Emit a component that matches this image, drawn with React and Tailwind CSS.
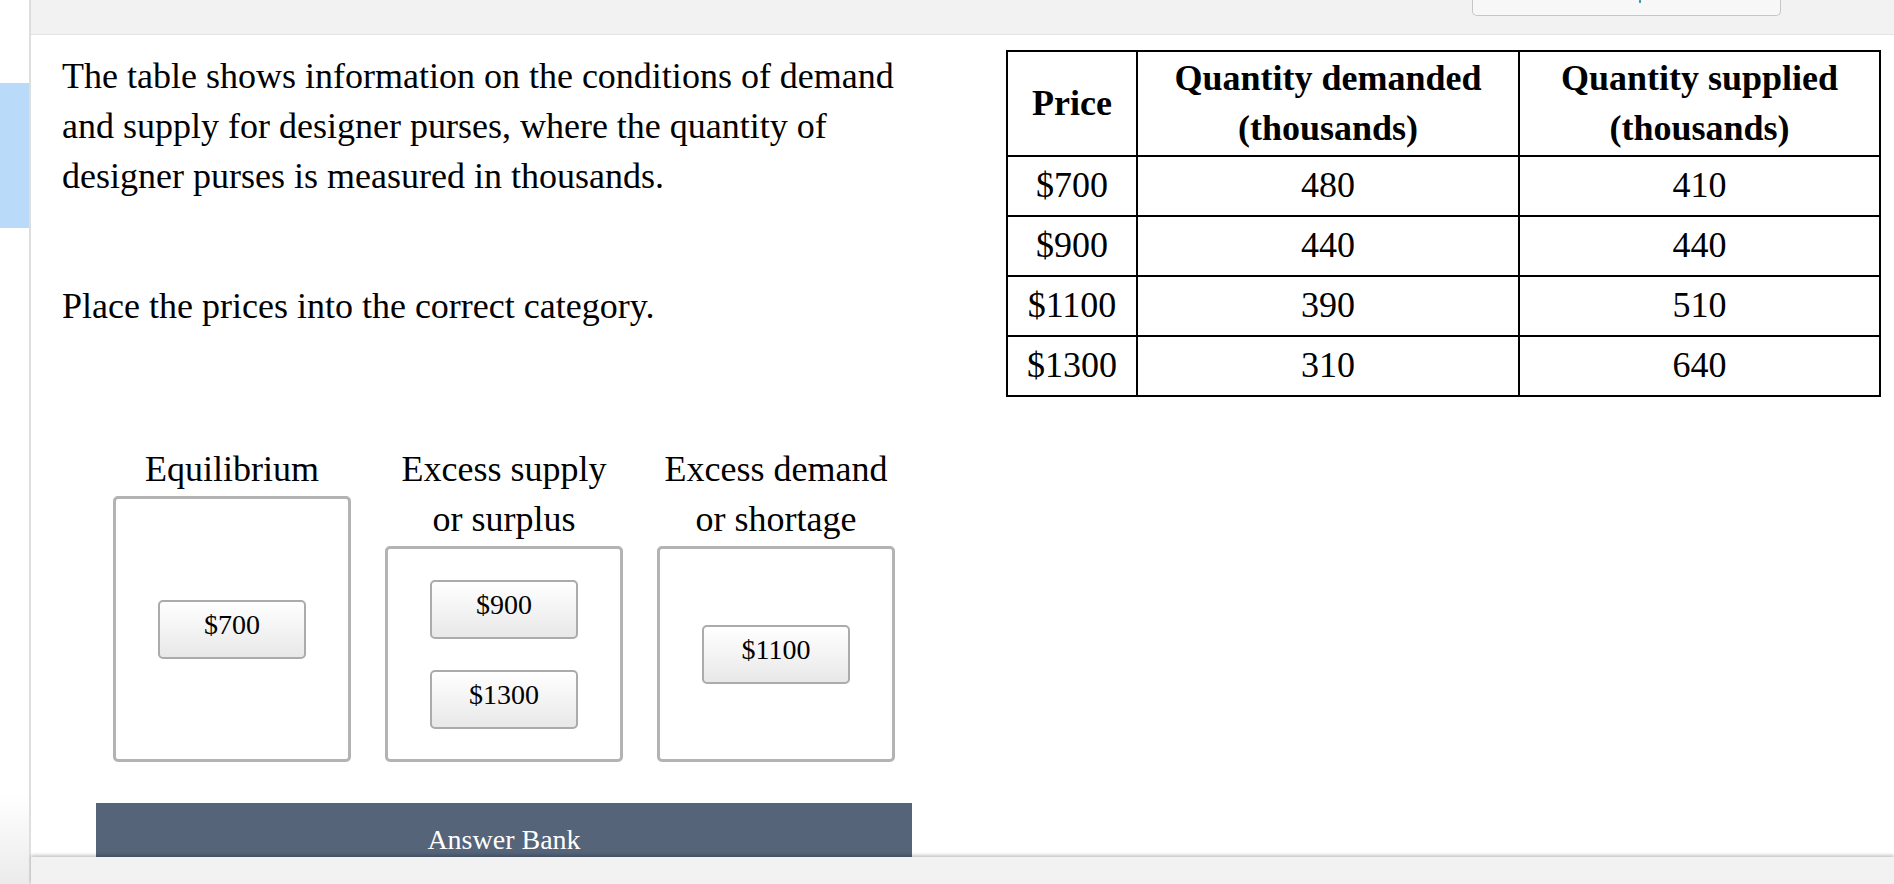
import React from "react";

const ROWS = [
  ["$700", "480", "410"],
  ["$900", "440", "440"],
  ["$1100", "390", "510"],
  ["$1300", "310", "640"],
];

const BINS = [
  { label: ["Equilibrium"], height: "h-[266px]", items: ["$700"] },
  { label: ["Excess supply", "or surplus"], height: "h-[216px]", items: ["$900", "$1300"] },
  { label: ["Excess demand", "or shortage"], height: "h-[216px]", items: ["$1100"] },
];

function Chip({ children }) {
  return (
    <div className="w-[148px] h-[59px] flex items-center justify-center border-2 border-[#ababab] rounded-[5px] bg-linear-to-b from-white to-[#e8e8e8] text-[28px] leading-none text-black pb-[8px]">
      {children}
    </div>
  );
}

export default function App() {
  return (
    <div className="w-[1894px] h-[884px] flex overflow-hidden bg-white text-black font-['Liberation_Serif',serif]">
      {/* left rail */}
      <div className="w-[31px] flex flex-col border-r-2 border-[#dedede] shrink-0">
        <div className="h-[83px] bg-white" />
        <div className="h-[145px] bg-[#badafa]" />
        <div className="flex-1 bg-white" />
        <div className="h-[90px] bg-linear-to-b from-white to-[#ebebeb]" />
      </div>

      <div className="flex-1 flex flex-col min-w-0">
        {/* top bar */}
        <div className="h-[35px] bg-[#f2f2f2] border-b border-[#e4e4e4] flex justify-end pr-[113px] shrink-0">
          <div className="w-[309px] h-[16px] bg-[#f7f7f7] border border-t-0 border-[#c6c6c6] rounded-b-[5px] pl-[166px]">
            <div className="w-[2px] h-[3px] bg-[#4a97b4]" />
          </div>
        </div>

        {/* content */}
        <div className="flex-1 flex overflow-hidden pt-[16px] pl-[31px]">
          <div className="w-[884px] shrink-0 flex flex-col">
            <p className="text-[36px] leading-[50px]">
              The table shows information on the conditions of demand and supply for designer purses, where the
              quantity of designer purses is measured in thousands.
            </p>
            <p className="text-[36px] leading-[50px] mt-[80px]">Place the prices into the correct category.</p>

            <div className="mt-[113px] flex justify-center items-end gap-[34px]">
              {BINS.map((bin) => (
                <div key={bin.label[0]} className="w-[238px] flex flex-col items-center">
                  <div className="text-[36px] leading-[50px] text-center mb-[2px]">
                    {bin.label.map((l) => (
                      <div key={l}>{l}</div>
                    ))}
                  </div>
                  <div
                    className={`w-[238px] ${bin.height} border-[3px] border-[#b3b3b3] rounded-[5px] flex flex-col items-center justify-center gap-[31px]`}
                  >
                    {bin.items.map((it) => (
                      <Chip key={it}>{it}</Chip>
                    ))}
                  </div>
                </div>
              ))}
            </div>

            <div className="mt-[41px] mx-auto w-[816px] h-[70px] shrink-0 bg-[#556479] text-white text-[28px] leading-[36px] text-center pt-[19px]">
              Answer Bank
            </div>
          </div>

          <div className="ml-[60px] -mt-[1px] shrink-0">
            <table className="table-fixed w-[873px] border-collapse border-2 border-black text-[36px] leading-[50px]">
              <colgroup>
                <col className="w-[130px]" />
                <col className="w-[382px]" />
                <col className="w-[361px]" />
              </colgroup>
              <thead>
                <tr className="h-[105px]">
                  <th className="border-2 border-black font-bold p-0 pb-[1px]">Price</th>
                  <th className="border-2 border-black font-bold p-0 pb-[1px]">
                    Quantity demanded
                    <br />
                    (thousands)
                  </th>
                  <th className="border-2 border-black font-bold p-0 pb-[1px]">
                    Quantity supplied
                    <br />
                    (thousands)
                  </th>
                </tr>
              </thead>
              <tbody>
                {ROWS.map((r) => (
                  <tr key={r[0]} className="h-[60px]">
                    {r.map((c, i) => (
                      <td key={i} className="border-2 border-black text-center p-0 pb-[3px]">
                        {c}
                      </td>
                    ))}
                  </tr>
                ))}
              </tbody>
            </table>
          </div>
        </div>

        {/* bottom bar */}
        <div className="h-[27px] shrink-0 bg-[#f2f2f2] relative z-10 shadow-[0_-2px_3px_rgba(0,0,0,0.22)]" />
      </div>
    </div>
  );
}
